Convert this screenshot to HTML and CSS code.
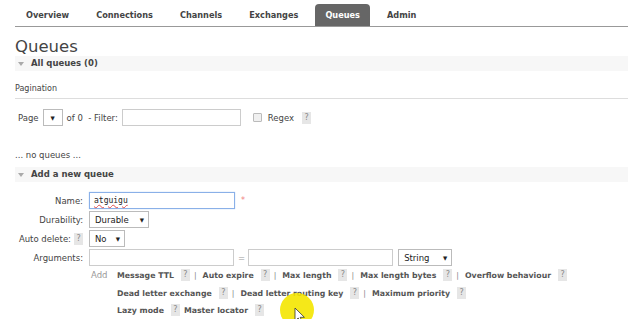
FILE: index.html
```html
<!DOCTYPE html>
<html>
<head>
	<title>RabbitMQ Management</title>
	<link rel="stylesheet" href="styles.css">
</head>
<body>
	<div class="page">
		<ul class="tabs">
			<li>Overview</li>
			<li>Connections</li>
			<li>Channels</li>
			<li>Exchanges</li>
			<li class="active">Queues</li>
			<li>Admin</li>
		</ul>

		<h1>Queues</h1>
		<div class="section-bar"><span class="arrow"></span>All queues (0)</div>

		<div class="pagination-title">Pagination</div>
		<div class="filter-row">
			<span>Page</span>
			<span class="select small-select"><span class="caret">&#9660;</span></span>
			<span>of 0 &nbsp;- Filter:</span>
			<span class="input filter-input"></span>
			<span class="checkbox"></span>
			<span>Regex</span>
			<span class="help">?</span>
		</div>

		<p class="empty">... no queues ...</p>

		<div class="section-bar"><span class="arrow"></span>Add a new queue</div>

		<div class="form">
			<div class="label">Name:</div>
			<div class="field">
				<span class="input name-input focused"><span class="typed">atguigu</span></span>
				<span class="required">*</span>
			</div>

			<div class="label">Durability:</div>
			<div class="field">
				<span class="select durability">Durable<span class="caret">&#9660;</span></span>
			</div>

			<div class="label">Auto delete: <span class="help">?</span></div>
			<div class="field">
				<span class="select autodelete">No<span class="caret">&#9660;</span></span>
			</div>

			<div class="label">Arguments:</div>
			<div class="field">
				<span class="input arg-input"></span>
				<span class="equals">=</span>
				<span class="input arg-input"></span>
				<span class="select type-select">String<span class="caret">&#9660;</span></span>
			</div>

			<div></div>
			<div class="add-row">
				<span class="add">Add</span>
				<div class="arg-links">
					<div class="link-line">
						<b>Message TTL</b><span class="help">?</span><span class="sep">|</span>
						<b>Auto expire</b><span class="help">?</span><span class="sep">|</span>
						<b>Max length</b><span class="help">?</span><span class="sep">|</span>
						<b>Max length bytes</b><span class="help">?</span><span class="sep">|</span>
						<b>Overflow behaviour</b><span class="help">?</span>
					</div>
					<div class="link-line">
						<b>Dead letter exchange</b><span class="help">?</span><span class="sep">|</span>
						<b>Dead letter routing key</b><span class="help">?</span><span class="sep">|</span>
						<b>Maximum priority</b><span class="help">?</span>
					</div>
					<div class="link-line">
						<b>Lazy mode</b><span class="help">?</span>
						<b>Master locator</b><span class="help">?</span>
					</div>
				</div>
			</div>
		</div>
	</div>

	<svg class="cursor" width="40" height="40" viewBox="0 0 40 40">
		<circle cx="17" cy="18" r="17" fill="#f4e600" opacity="0.9"/>
		<path d="M15 16 L15 29 L18.2 26 L20.5 31 L22.4 30.1 L20.2 25.3 L24.4 25.3 Z" fill="#fff" stroke="#333" stroke-width="0.8"/>
	</svg>
</body>
</html>
```

FILE: styles.css
```css
*{
	box-sizing: border-box;
}
body{
	margin: 0;
	background: #fff;
	color: #444;
	font-family: "DejaVu Sans", Verdana, sans-serif;
	font-size: 8.5px;
}
.page{
	padding: 0 0 0 15px;
}

/* top navigation */
.tabs{
	list-style: none;
	margin: 0;
	padding: 4px 0 0 1px;
	display: flex;
	gap: 7px;
	border-bottom: 1px solid #999;
	height: 27px;
}
.tabs li{
	padding: 0 10px;
	height: 22px;
	line-height: 22px;
	font-weight: bold;
	font-size: 8.2px;
	color: #444;
}
.tabs li.active{
	background: #666;
	color: #fff;
	border-radius: 4px 4px 0 0;
}

h1{
	margin: 10px 0 0 0;
	font-size: 16.5px;
	font-weight: normal;
	color: #444;
	line-height: 19px;
}

.section-bar{
	background: #f7f7f7;
	height: 15px;
	line-height: 15px;
	font-weight: bold;
	padding-left: 3px;
	display: flex;
	align-items: center;
}
.arrow{
	width: 0;
	height: 0;
	border-left: 3.5px solid transparent;
	border-right: 3.5px solid transparent;
	border-top: 4px solid #aaa;
	margin-right: 7px;
}

.pagination-title{
	margin-top: 13px;
	padding-bottom: 4px;
	border-bottom: 1px solid #ddd;
	font-size: 8px;
	line-height: 10px;
}
.filter-row{
	display: flex;
	align-items: center;
	gap: 4px;
	margin: 10px 0 0 3px;
	height: 17px;
}

.input{
	display: inline-block;
	height: 17px;
	border: 1px solid #ccc;
	background: #fff;
}
.filter-input{
	width: 119px;
	margin-right: 8px;
}
.select{
	display: inline-flex;
	align-items: center;
	justify-content: space-between;
	height: 17px;
	padding: 0 4px 0 5px;
	border: 1px solid #bbb;
	background: #fff;
	color: #222;
	font-size: 8.5px;
}
.caret{
	font-size: 5.5px;
	color: #222;
}
.small-select{
	width: 20px;
	justify-content: center;
	padding: 0;
}
.checkbox{
	width: 9px;
	height: 9px;
	border: 1px solid #bbb;
	background: #f0f0f0;
	border-radius: 1px;
	margin-right: 2px;
}
.help{
	display: inline-block;
	background: #e6e6e6;
	color: #888;
	width: 9px;
	height: 12px;
	line-height: 12px;
	text-align: center;
	font-size: 8px;
	font-weight: normal;
	margin-left: 4px;
}

.empty{
	margin: 24px 0 0 0;
	line-height: 10px;
	height: 17px;
}

/* add queue form */
.form{
	display: grid;
	grid-template-columns: 68px 1fr;
	column-gap: 6px;
	row-gap: 2px;
	margin-top: 10px;
	align-items: center;
}
.label{
	white-space: nowrap;
	display: flex;
	justify-content: flex-end;
	align-items: center;
}
.label .help{
	margin-left: 3px;
}
.field{
	display: flex;
	align-items: center;
	height: 17px;
}
.name-input{
	width: 146px;
	padding-left: 4px;
	line-height: 14px;
}
.focused{
	border-color: #8ab0e8;
	box-shadow: 0 0 1px #a8c8f0;
}
.typed{
	font-family: "DejaVu Sans Mono", monospace;
	font-size: 8px;
	color: #222;
	text-decoration: underline wavy #e05050;
	text-decoration-thickness: 0.5px;
}
.required{
	color: #f08080;
	margin-left: 6px;
	font-size: 8px;
}
.durability{
	width: 60px;
}
.autodelete{
	width: 36px;
}
.arg-input{
	width: 145px;
}
.equals{
	color: #999;
	margin: 0 3px 0 4px;
}
.type-select{
	width: 54px;
	margin-left: 5px;
}

.add-row{
	display: flex;
	margin-top: 1px;
}
.add{
	color: #999;
	width: 28px;
	padding-left: 2px;
	line-height: 12px;
}
.link-line{
	height: 17.5px;
	display: flex;
	align-items: flex-start;
	white-space: nowrap;
	font-size: 7.8px;
}
.link-line b{
	color: #555;
	line-height: 12px;
	margin-top: 1px;
}
.link-line .help{
	margin: 0 4px 0 7px;
}
.sep{
	color: #888;
	margin-right: 6px;
	line-height: 12px;
	margin-top: 1px;
}

.cursor{
	position: absolute;
	left: 280px;
	top: 292px;
}
```
